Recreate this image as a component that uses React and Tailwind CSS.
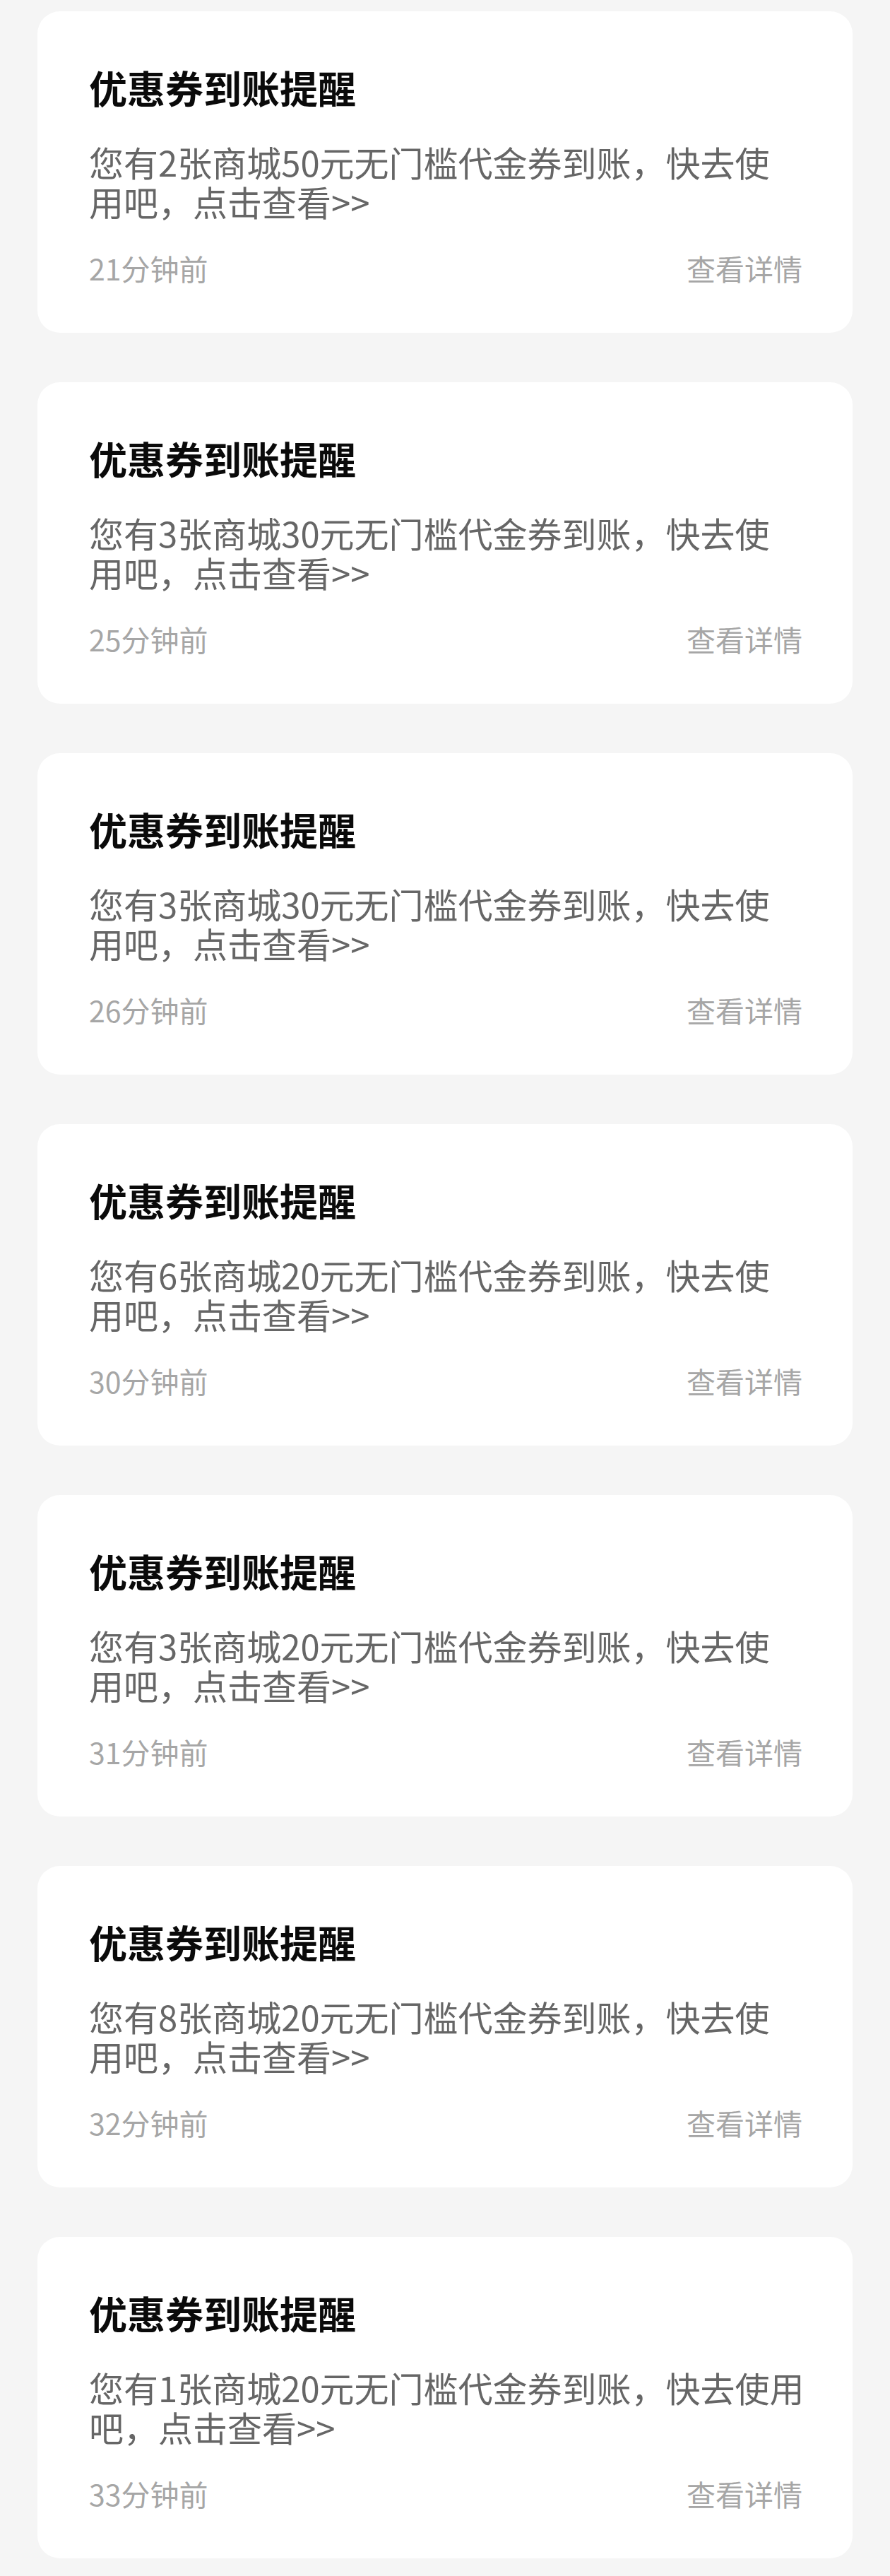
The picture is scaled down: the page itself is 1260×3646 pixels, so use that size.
const notices = [
  { line1: "您有2张商城50元无门槛代金券到账，快去使", line2: "用吧，点击查看>>", time: "21分钟前" },
  { line1: "您有3张商城30元无门槛代金券到账，快去使", line2: "用吧，点击查看>>", time: "25分钟前" },
  { line1: "您有3张商城30元无门槛代金券到账，快去使", line2: "用吧，点击查看>>", time: "26分钟前" },
  { line1: "您有6张商城20元无门槛代金券到账，快去使", line2: "用吧，点击查看>>", time: "30分钟前" },
  { line1: "您有3张商城20元无门槛代金券到账，快去使", line2: "用吧，点击查看>>", time: "31分钟前" },
  { line1: "您有8张商城20元无门槛代金券到账，快去使", line2: "用吧，点击查看>>", time: "32分钟前" },
  { line1: "您有1张商城20元无门槛代金券到账，快去使用", line2: "吧，点击查看>>", time: "33分钟前" },
];

const NoticeCard = ({ notice }) => (
  <div className="bg-white rounded-[32px] pt-[78px] pb-[68px] pl-[73px] pr-[71px]">
    <h2 className="text-[54px] leading-[60px] font-semibold text-[#0a0a0a]">优惠券到账提醒</h2>
    <p className="mt-[47px] text-[49px] leading-[56px] text-[#666666] whitespace-nowrap">
      {notice.line1}
      <br />
      {notice.line2}
    </p>
    <div className="mt-[42px] flex justify-between items-center text-[41px] leading-[48px] text-[#a6a6a6]">
      <span>{notice.time}</span>
      <span>查看详情</span>
    </div>
  </div>
);

export default function App() {
  return (
    <div
      className="min-h-screen bg-[#f5f5f5] pt-[16px] pb-[25px] px-[53px] flex flex-col gap-[70px]"
      style={{ fontFamily: '"Noto Sans CJK SC", "Noto Sans", sans-serif' }}
    >
      {notices.map((n, i) => (
        <NoticeCard key={i} notice={n} />
      ))}
    </div>
  );
}
